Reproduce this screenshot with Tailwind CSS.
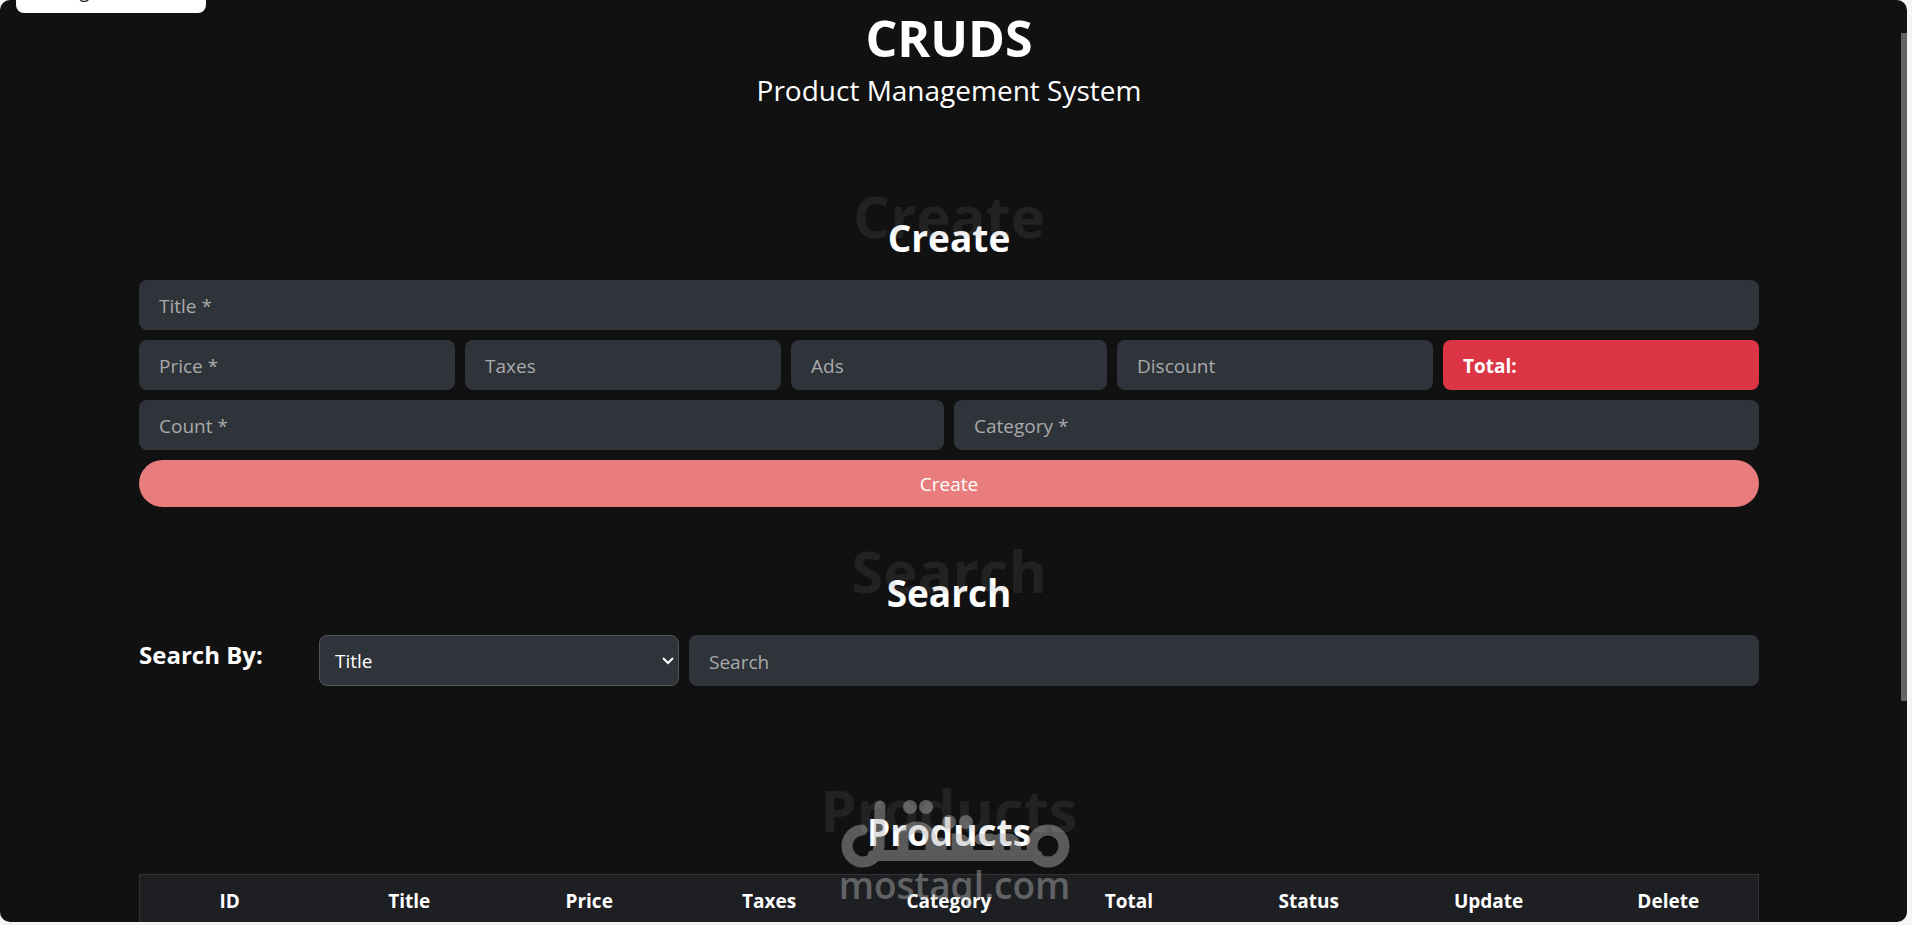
<!DOCTYPE html>
<html lang="en">
<head>
  <meta charset="UTF-8">
  <meta name="viewport" content="width=device-width, initial-scale=1.0">
  <title>CRUDS</title>
  <script src="https://cdn.jsdelivr.net/npm/@tailwindcss/browser@4"></script>
</head>
<body class="h-screen overflow-hidden bg-[#f4f4f4] pr-[5px] pb-[3px] font-['Open_Sans','Noto_Sans',sans-serif] text-white">
  <div class="relative h-full overflow-hidden rounded-[10px] bg-[#111]">

    <!-- Mode button -->
    <button type="button" class="absolute -top-[31px] left-4 flex h-11 w-[190px] items-center justify-between rounded-lg bg-white pl-5 pr-4 text-lg text-[#222]">
      <span>Change Mode</span>
      <svg class="size-4" viewBox="0 0 16 16" fill="none" stroke="#888" stroke-width="2"><path d="M4 7l4 4 4-4"/></svg>
    </button>

    <!-- Scroll thumb -->
    <div class="absolute right-0 top-[33px] h-[668px] w-[6px] bg-[#626262]"></div>

    <main class="mr-[9px] px-[139px]">
      <header class="pt-2 text-center">
        <h1 class="text-[50px] leading-[60px] font-bold">CRUDS</h1>
        <p class="text-[28px] leading-[44px]">Product Management System</p>
      </header>

      <!-- Create -->
      <section class="pt-24">
        <h2 class="relative text-center text-[37px] leading-[60px] font-bold">Create
          <span aria-hidden="true" class="absolute inset-x-0 -top-[22px] text-[58px] text-[#888]/15">Create</span>
        </h2>
        <form class="mt-3 grid grid-cols-10 gap-[10px] text-[19px]">
          <input type="text" aria-label="Title" placeholder="Title *" class="col-span-10 h-[50px] min-w-0 rounded-lg bg-[#2f333a] px-5 pt-[2px] placeholder:text-[#aaa]">
          <input type="text" aria-label="Price" placeholder="Price *" class="col-span-2 h-[50px] min-w-0 rounded-lg bg-[#2f333a] px-5 pt-[2px] placeholder:text-[#aaa]">
          <input type="text" aria-label="Taxes" placeholder="Taxes" class="col-span-2 h-[50px] min-w-0 rounded-lg bg-[#2f333a] px-5 pt-[2px] placeholder:text-[#aaa]">
          <input type="text" aria-label="Ads" placeholder="Ads" class="col-span-2 h-[50px] min-w-0 rounded-lg bg-[#2f333a] px-5 pt-[2px] placeholder:text-[#aaa]">
          <input type="text" aria-label="Discount" placeholder="Discount" class="col-span-2 h-[50px] min-w-0 rounded-lg bg-[#2f333a] px-5 pt-[2px] placeholder:text-[#aaa]">
          <div class="col-span-2 flex h-[50px] items-center rounded-lg bg-[#dc3545] px-5 pt-[2px] font-bold">Total:</div>
          <input type="text" aria-label="Count" placeholder="Count *" class="col-span-5 h-[50px] min-w-0 rounded-lg bg-[#2f333a] px-5 pt-[2px] placeholder:text-[#aaa]">
          <input type="text" aria-label="Category" placeholder="Category *" class="col-span-5 h-[50px] min-w-0 rounded-lg bg-[#2f333a] px-5 pt-[2px] placeholder:text-[#aaa]">
          <button type="button" class="col-span-10 h-[47px] rounded-full bg-[#e97c7c] pt-[2px]">Create</button>
        </form>
      </section>

      <!-- Search -->
      <section class="pt-14">
        <h2 class="relative text-center text-[37px] leading-[60px] font-bold">Search
          <span aria-hidden="true" class="absolute inset-x-0 -top-[22px] text-[58px] text-[#888]/15">Search</span>
        </h2>
        <div class="mt-3 flex gap-[10px] text-[19px]">
          <label for="search-by" class="w-[170px] text-2xl leading-[40px] font-bold">Search By:</label>
          <div class="relative w-[360px]">
            <select id="search-by" class="h-[51px] w-full appearance-none rounded-lg border border-[#555] bg-[#2f333a] px-[15px] pt-[2px]">
              <option>Title</option>
              <option>Category</option>
            </select>
            <svg class="pointer-events-none absolute right-1 top-5 h-3 w-[14px]" viewBox="0 0 14 12" fill="none" stroke="#fff" stroke-width="2"><path d="M2 3l5 5 5-5"/></svg>
          </div>
          <input type="text" aria-label="Search" placeholder="Search" class="h-[51px] min-w-0 flex-1 rounded-lg bg-[#2f333a] px-5 pt-[2px] placeholder:text-[#aaa]">
        </div>
      </section>

      <!-- Products -->
      <section class="pt-[116px]">
        <h2 class="relative text-center text-[37px] leading-[60px] font-bold">Products
          <span aria-hidden="true" class="absolute inset-x-0 -top-[22px] text-[58px] text-[#888]/15">Products</span>
        </h2>
        <table class="mt-3 w-full table-fixed border border-[#333] bg-[#1e1f23] text-[19px]">
          <thead>
            <tr class="h-[53px]">
              <th>ID</th>
              <th>Title</th>
              <th>Price</th>
              <th>Taxes</th>
              <th>Category</th>
              <th>Total</th>
              <th>Status</th>
              <th>Update</th>
              <th>Delete</th>
            </tr>
          </thead>
        </table>
      </section>
    </main>

    <!-- Watermark -->
    <div class="pointer-events-none absolute bottom-0 left-1/2 h-[132px] w-[250px] -translate-x-[124px] opacity-45">
      <svg class="w-full" viewBox="830 790 250 80" fill="none" stroke="#b4b4b4" stroke-width="11" stroke-linecap="round">
        <path d="M862 830a16 16 0 1 0 17 16L880 806M873 855.500H1037M1032 846a16 16 0 1 0 32 0a16 16 0 1 0-32 0M903 853V841a14 14 0 0 1 28 0V853M941 853V843M957 853V839q11 0 11 14M980 839h8q11 0 11 14M1000 839h8q8 0 8 14"/>
        <g fill="#b4b4b4" stroke="none">
          <circle cx="910" cy="807" r="7"/>
          <circle cx="926" cy="807" r="7"/>
          <circle cx="949" cy="822" r="7"/>
          <circle cx="966" cy="822" r="7"/>
        </g>
      </svg>
      <p class="text-center text-[37px] leading-[30px] font-semibold text-[#b4b4b4]">mostaql.com</p>
    </div>
  </div>
</body>
</html>
